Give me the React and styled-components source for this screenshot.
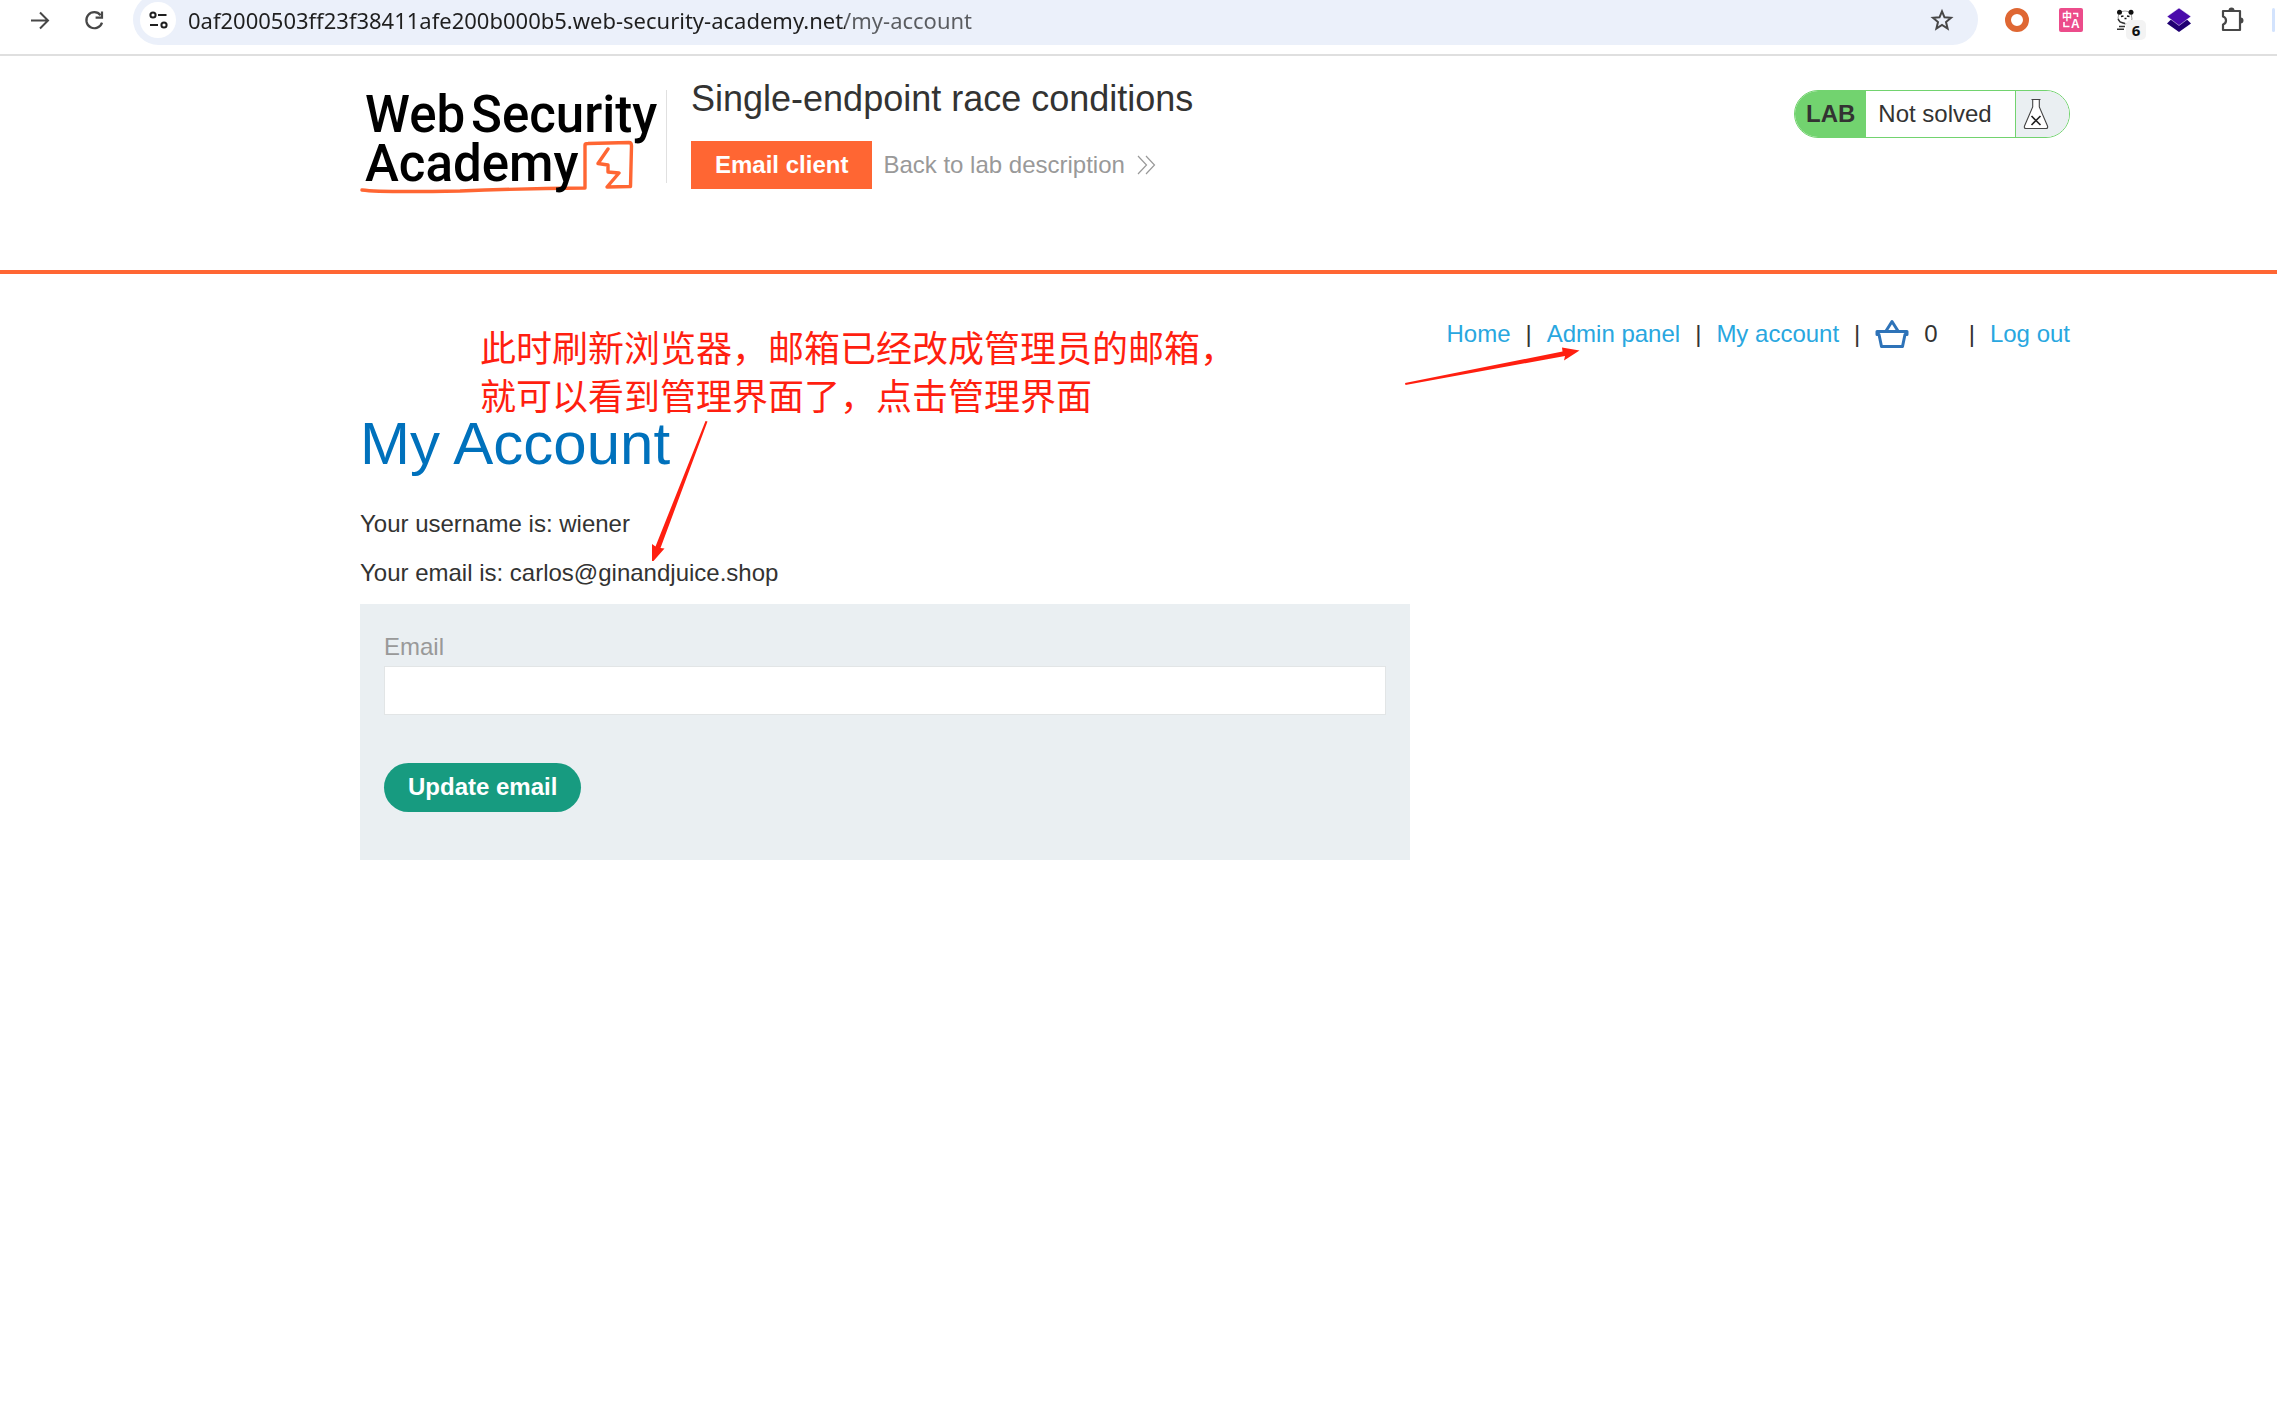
import React from 'react';
import styled, { createGlobalStyle } from 'styled-components';

const App = () => {
  return (
    <Page>
      <GlobalStyle />
      <BrowserBar />
      <LabHeader />
      <Account />
    </Page>
  );
};

export default App;

const BrowserBar = () => (
  <Toolbar>
    <NavButtons>
      <IconButton aria-label="Forward">
        <svg width="24" height="24" viewBox="0 0 24 24" fill="none" stroke="#474747" strokeWidth="2">
          <path d="M3 12.5H20M12 4.5L20 12.5L12 20.5" />
        </svg>
      </IconButton>
      <IconButton aria-label="Reload">
        <svg width="24" height="24" viewBox="0 0 24 24" fill="none" stroke="#474747" strokeWidth="2.2">
          <path d="M18.6 7.2A8 8 0 1 0 20 14.6" />
          <path d="M20 3.5V9.7H13.6" />
        </svg>
      </IconButton>
    </NavButtons>
    <AddressBar>
      <SiteInfo aria-label="View site information">
        <svg width="20" height="20" viewBox="0 0 20 20" fill="none" stroke="#1f1f1f" strokeWidth="2">
          <circle cx="5" cy="5" r="2.6" />
          <path d="M10 5H18.5M2 15H10" />
          <circle cx="16" cy="15" r="2.6" />
        </svg>
      </SiteInfo>
      <UrlInput
        type="text"
        aria-label="Address"
        defaultValue="0af2000503ff23f38411afe200b000b5.web-security-academy.net/my-account"
      />
      <IconButton aria-label="Bookmark this tab">
        <svg width="24" height="24" viewBox="0 0 24 24" fill="none" stroke="#474747" strokeWidth="2">
          <path d="M12 3.3L14.5 9.3L21 9.8L16 14L17.6 20.5L12 17L6.4 20.5L8 14L3 9.8L9.5 9.3Z" />
        </svg>
      </IconButton>
    </AddressBar>
    <Extensions>
      <IconButton aria-label="Ring extension">
        <svg width="24" height="24" viewBox="0 0 24 24">
          <circle cx="12" cy="12" r="9" fill="none" stroke="#df6733" strokeWidth="6" />
        </svg>
      </IconButton>
      <IconButton aria-label="Translate">
        <svg width="24" height="24" viewBox="0 0 24 24">
          <rect width="24" height="24" rx="2" fill="#ec4c8b" />
          <g fill="#fff" fontWeight="700">
            <text x="3" y="12" fontSize="10" fontFamily="'Noto Sans CJK SC', sans-serif">中</text>
            <text x="12" y="20" fontSize="12" fontFamily="'Liberation Sans', sans-serif">A</text>
          </g>
          <path d="M14 5.5H18.5V9M5 14V18.5H10.5" fill="none" stroke="#fff" strokeWidth="1.6" />
        </svg>
      </IconButton>
      <IconButton aria-label="Panda extension">
        <svg width="24" height="24" viewBox="0 0 24 24">
          <path d="M6 5Q12 1 18 5L19 11Q18 16 12 16Q6 15 5 10Z" fill="#fff" stroke="#777" strokeWidth="0.7" />
          <circle cx="6.5" cy="4.2" r="2.5" fill="#111" />
          <circle cx="18" cy="4.2" r="2.5" fill="#111" />
          <path d="M8 8.5L10.5 8M14 8L16.5 8.5M11.5 10.5H13.5" stroke="#111" strokeWidth="1.6" />
          <path d="M5 11L7 14L12 15.5M6 18.5H12M4 21.3H11" fill="none" stroke="#333" strokeWidth="1.4" />
        </svg>
        <Badge>6</Badge>
      </IconButton>
      <IconButton aria-label="Layers extension">
        <svg width="24" height="24" viewBox="0 0 24 24">
          <path d="M0 15.5L3.5 12H20.5L24 15.5L12 24Z" fill="#200072" />
          <path d="M0 8.5L12 0L24 8.5L12 17.5Z" fill="#4a0bab" stroke="#fff" strokeWidth="0.5" />
        </svg>
      </IconButton>
      <IconButton aria-label="Extensions">
        <svg width="24" height="26" viewBox="2 0 24 26" fill="none" stroke="#474747" strokeWidth="2.2">
          <path d="M4 4H21V23H4V17.5Q7 16.5 7 13.5Q7 10.5 4 9.5Z" strokeLinejoin="round" />
          <path d="M9.5 3.5A3 3 0 0 1 15.5 3.5ZM21.5 10.5A3 3 0 0 1 21.5 16.5Z" fill="#474747" stroke="none" />
        </svg>
      </IconButton>
    </Extensions>
    <ToolbarEdge />
  </Toolbar>
);

const LabHeader = () => (
  <Header>
    <AcademyLogo />
    <TitleBlock>
      <LabTitle>Single-endpoint race conditions</LabTitle>
      <Actions>
        <EmailClient href="#email">Email client</EmailClient>
        <BackLink href="#description">
          Back to lab description
          <svg width="20" height="20" viewBox="0 0 20 20" fill="none" stroke="#999" strokeWidth="1.2">
            <path d="M1 1L9.5 10L1 19M9 1L17.5 10L9 19" />
          </svg>
        </BackLink>
      </Actions>
    </TitleBlock>
    <Status>
      <StatusTag>LAB</StatusTag>
      <StatusText>Not solved</StatusText>
      <StatusIcon>
        <svg width="26" height="32" viewBox="0 0 26 32">
          <path
            d="M8.5 1.5H17.5M9.7 1.5V9L1.5 28Q0.8 30.5 3 30.5H23Q25.2 30.5 24.5 28L16.3 9V1.5"
            fill="#fff"
            stroke="#444"
            strokeWidth="1.1"
          />
          <path d="M8.5 18L17.5 27M17.5 18L8.5 27" stroke="#222" strokeWidth="1.6" />
        </svg>
      </StatusIcon>
    </Status>
  </Header>
);

const AcademyLogo = () => (
  <LogoLink href="#academy" aria-label="Web Security Academy">
    <svg width="300" height="108" viewBox="0 0 300 108">
      <path
        d="M2 100Q20 102.500 100 101Q160 98.500 225 98L225 55Q225 53.500 228 53.500L269 52.500Q271.500 52.500 271.500 56L270.500 96.500L247 97L259 83L248 82V75L238 73.500L248 59"
        fill="none"
        stroke="#ff6633"
        strokeWidth="3.4"
        strokeLinejoin="round"
        strokeLinecap="round"
      />
      <g fontFamily="Roboto, sans-serif" fontWeight="500" fontSize="51" fill="#000">
        <text x="5" y="42">Web</text>
        <text x="111" y="42">Security</text>
        <text x="5" y="91">Academy</text>
      </g>
    </svg>
  </LogoLink>
);

const Account = () => (
  <Main>
    <TopLinks>
      <a href="#home">Home</a>
      <span>|</span>
      <a href="#admin">Admin panel</a>
      <span>|</span>
      <a href="#account">My account</a>
      <span>|</span>
      <Cart href="#cart" aria-label="Basket">
        <svg width="34" height="30" viewBox="0 0 34 30" fill="none" stroke="#2e73b8" strokeWidth="3" strokeLinejoin="round">
          <path d="M2 12.5H32V15.5H30L27.5 27.5H6.5L4 15.5H2Z" />
          <path d="M11 12L17 2.5L23 12" />
        </svg>
        <CartCount>0</CartCount>
      </Cart>
      <span>|</span>
      <a href="#logout">Log out</a>
    </TopLinks>
    <PageTitle>My Account</PageTitle>
    <Details>
      <p>Your username is: wiener</p>
      <p>Your email is: carlos@ginandjuice.shop</p>
    </Details>
    <EmailForm onSubmit={e => e.preventDefault()}>
      <label htmlFor="email">Email</label>
      <EmailInput id="email" type="email" />
      <SubmitButton type="submit">Update email</SubmitButton>
    </EmailForm>

    <Note>
      此时刷新浏览器，邮箱已经改成管理员的邮箱，
      <br />
      就可以看到管理界面了，点击管理界面
    </Note>
    <Arrow $left={650} $top={146} width="60" height="144" viewBox="650 420 60 144">
      <path d="M705.5 421L707.5 421.5L660.5 548L664.5 548.5L653.5 561L652 561V544L655.5 546.5Z" />
    </Arrow>
    <Arrow $left={1404} $top={70} width="178" height="44" viewBox="1404 344 178 44">
      <path d="M1405 383L1562.5 351.5L1562 347.5L1579.5 350.5L1564 360.5L1565 356L1405.5 385Z" />
    </Arrow>
  </Main>
);

const GlobalStyle = createGlobalStyle`
  * {
    box-sizing: border-box;
  }

  body {
    margin: 0;
    background: #fff;
    color: #333332;
    font-family: 'Liberation Sans', Arial, sans-serif;
    font-size: 24px;
    line-height: 30px;
  }

  a {
    text-decoration: none;
  }

  svg {
    display: block;
    flex-shrink: 0;
  }
`;

const Page = styled.div`
  overflow: hidden;
`;

const Toolbar = styled.div`
  display: flex;
  align-items: center;
  height: 56px;
  padding: 0 2px 15px 28px;
  border-bottom: 2px solid #dfdfdf;
  overflow: hidden;
`;

const NavButtons = styled.div`
  display: flex;
  gap: 30px;
  margin-right: 27px;
`;

const IconButton = styled.button`
  position: relative;
  display: flex;
  align-items: center;
  justify-content: center;
  width: 24px;
  height: 24px;
  padding: 0;
  border: none;
  background: none;
  cursor: pointer;
`;

const AddressBar = styled.div`
  display: flex;
  flex: 1;
  align-items: center;
  gap: 12px;
  height: 51px;
  padding: 0 24px 0 7px;
  border-radius: 26px;
  background: #ebf0fa;
`;

const SiteInfo = styled(IconButton)`
  width: 36px;
  height: 36px;
  border-radius: 50%;
  background: #fff;
`;

const UrlInput = styled.input`
  flex: 1;
  min-width: 0;
  padding: 0;
  border: none;
  outline: none;
  color: #1f1f1f;
  background: linear-gradient(to right, #1f1f1f 657px, #5a5c60 657px);
  background-clip: text;
  -webkit-text-fill-color: transparent;
  font: 22px/30px 'Noto Sans', sans-serif;
`;

const Extensions = styled.div`
  display: flex;
  gap: 30px;
  margin: 0 27px;
`;

const Badge = styled.span`
  position: absolute;
  top: 12px;
  left: 13px;
  width: 20px;
  height: 20px;
  border-radius: 5px;
  background: #f3f3f3;
  color: #111;
  font: bold 15px/20px 'Noto Sans', sans-serif;
  text-align: center;
`;

const ToolbarEdge = styled.div`
  width: 3px;
  height: 24px;
  border-radius: 2px;
  background: #d3e3fd;
`;

const Header = styled.header`
  display: flex;
  align-items: flex-start;
  height: 218px;
  padding: 20px 207px 0 360px;
  border-bottom: 4px solid #ff6633;
`;

const LogoLink = styled.a`
  margin-top: 14px;
  height: 93px;
  padding-right: 6px;
  border-right: 1px solid #e0e0e0;
`;

const TitleBlock = styled.div`
  flex: 1;
  margin-left: 24px;
`;

const LabTitle = styled.h2`
  margin: 0 0 20px;
  font-size: 36px;
  font-weight: 400;
  line-height: 45px;
`;

const Actions = styled.div`
  display: flex;
  align-items: center;
  gap: 11px;
`;

const EmailClient = styled.a`
  padding: 0 24px;
  background: #ff6633;
  color: #fff;
  font-weight: bold;
  line-height: 48px;
`;

const BackLink = styled.a`
  display: flex;
  align-items: center;
  gap: 12px;
  color: #999;
`;

const Status = styled.div`
  display: flex;
  width: 276px;
  height: 48px;
  margin-top: 14px;
  border: 1px solid #72d36f;
  border-radius: 24px;
  overflow: hidden;
  line-height: 46px;
`;

const StatusTag = styled.strong`
  padding: 0 11px;
  background: #72d36f;
`;

const StatusText = styled.span`
  flex: 1;
  padding-left: 12px;
`;

const StatusIcon = styled.span`
  display: flex;
  align-items: center;
  width: 54px;
  padding-left: 7px;
  border-left: 1px solid #72d36f;
  background: #eaeff2;
`;

const Main = styled.main`
  position: relative;
  padding: 36px 207px 48px 360px;
`;

const TopLinks = styled.nav`
  display: flex;
  align-items: center;
  justify-content: flex-end;
  gap: 15px;
  height: 48px;

  a {
    color: #29a7df;
  }
`;

const Cart = styled.a`
  display: flex;
  align-items: center;
  gap: 15px;
  margin-right: 16px;
`;

const CartCount = styled.span`
  color: #333332;
`;

const PageTitle = styled.h1`
  margin: 50px 0 29px;
  color: #0071bc;
  font-size: 60px;
  font-weight: 400;
  line-height: 72px;
`;

const Details = styled.div`
  display: flex;
  flex-direction: column;
  gap: 19px;
  margin-bottom: 16px;

  p {
    margin: 0;
  }
`;

const EmailForm = styled.form`
  display: flex;
  flex-direction: column;
  align-items: flex-start;
  max-width: 1050px;
  padding: 28px 24px 48px;
  background: #eaeff2;
  color: #999;
`;

const EmailInput = styled.input`
  width: 100%;
  height: 49px;
  margin: 4px 0 48px;
  padding: 0 12px;
  border: 1px solid #e2e5e6;
  background: #fff;
  font: inherit;
`;

const SubmitButton = styled.button`
  height: 49px;
  padding: 0 24px 1px;
  border: none;
  border-radius: 25px;
  background: #179b80;
  color: #fff;
  font: inherit;
  font-weight: bold;
  cursor: pointer;
`;

const Note = styled.div`
  position: absolute;
  top: 48px;
  left: 480px;
  color: #ff1f10;
  font: 36px/48px 'Noto Sans CJK SC', sans-serif;
  white-space: nowrap;
`;

const Arrow = styled.svg`
  position: absolute;
  top: ${props => props.$top}px;
  left: ${props => props.$left}px;
  fill: #ff1f10;
`;
